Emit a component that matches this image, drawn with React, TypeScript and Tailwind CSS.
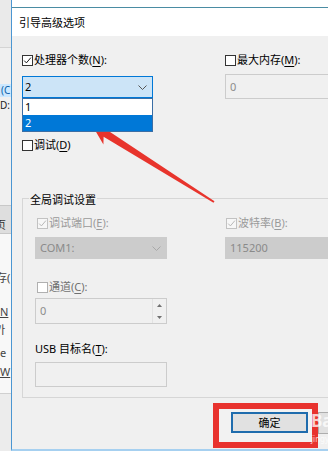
import React from "react";

type Tone = "normal" | "disabled" | "light";

const boxCls: Record<Tone, string> = {
  normal: "border-[#333333] bg-white",
  disabled: "border-[#c2c2c2] bg-[#f7f7f7]",
  light: "border-[#b0b0b0] bg-white",
};
const checkColor: Record<Tone, string> = {
  normal: "#1a1a1a",
  disabled: "#b8b8b8",
  light: "#888888",
};

function Box({ checked, tone = "normal" }: { checked?: boolean; tone?: Tone }) {
  return (
    <span className={`flex h-[11px] w-[11px] flex-none items-center justify-center border ${boxCls[tone]}`}>
      {checked && (
        <svg width="9" height="9" viewBox="0 0 9 9">
          <path d="M1.2 4.6 L3.4 6.9 L7.9 1.6" fill="none" stroke={checkColor[tone]} strokeWidth="1" />
        </svg>
      )}
    </span>
  );
}

function Chevron({ color }: { color: string }) {
  return (
    <svg width="9" height="5" viewBox="0 0 9 5">
      <path d="M0.5 0.5 L4.5 4.5 L8.5 0.5" fill="none" stroke={color} strokeWidth="1" />
    </svg>
  );
}

function U({ children }: { children: React.ReactNode }) {
  return <span className="underline underline-offset-[2px]">{children}</span>;
}

function LeftStrip() {
  return (
    <div className="flex w-[11px] flex-none flex-col overflow-hidden whitespace-nowrap bg-[#f0f0f0] text-[11px] leading-[14px]">
      <div className="h-[47px] flex-none bg-[#eaeaea]" />
      <div className="h-px flex-none bg-[#d4d4d4]" />
      <div className="h-[36px] flex-none" />
      <div className="h-[13px] flex-none overflow-hidden bg-[#cce8ff] pl-[1px] text-[10px] leading-[13px] text-[#0a5fa8]">(C</div>
      <div className="mt-[2px] h-[12px] flex-none overflow-hidden text-[10px] leading-[12px] text-[#222]">D:</div>
      <div className="h-[94px] flex-none" />
      <div className="flex h-[29px] flex-none items-end border-y border-[#c8c8c8] bg-[#dedede] pb-[1px]">
        <span className="-ml-[5px] text-[#333]">页</span>
      </div>
      <div className="flex h-[159px] flex-none flex-col bg-[#f8f8f8] text-[#444]">
        <div className="h-[37px] flex-none" />
        <div className="-ml-[4px] h-[14px] flex-none">存(</div>
        <div className="h-[20px] flex-none" />
        <div className="h-[14px] flex-none underline">N</div>
        <div className="h-[4px] flex-none" />
        <div className="-ml-[5px] h-[14px] flex-none">카</div>
        <div className="h-[9px] flex-none" />
        <div className="h-[14px] flex-none">e</div>
        <div className="h-[5px] flex-none" />
        <div className="h-[14px] flex-none underline">W</div>
      </div>
      <div className="h-px flex-none bg-[#d0d0d0]" />
      <div className="flex-1 bg-[#ececec]" />
    </div>
  );
}

export default function App() {
  return (
    <div className="relative flex h-[451px] w-[328px] overflow-hidden bg-[#f0f0f0] font-['Noto_Sans','Noto_Sans_CJK_SC',sans-serif] text-[11px] leading-[14px] text-black">
      <LeftStrip />
      <div className="flex min-w-0 flex-1 flex-col overflow-hidden border-b-2 border-l border-b-[#a6d0f0] border-l-[#4b96d2]">
        <div className="h-[7px] flex-none bg-white" />
        <div className="flex h-[29px] flex-none items-center border-t border-[#4a8ca3] bg-white pl-[7px] pt-[1px]">
          引导高级选项
        </div>
        <div className="flex flex-1 flex-col bg-[#f0f0f0] pl-[10px]">
          {/* top row */}
          <div className="mt-[17px] flex">
            <div className="flex w-[131px] flex-none flex-col">
              <div className="flex h-[14px] items-center gap-[1px]">
                <Box checked />
                <span>
                  处理器个数(<U>N</U>):
                </span>
              </div>
              <div className="relative mt-[9px]">
                <div className="flex h-[22px] items-center justify-between border border-[#0078d7] bg-[#cce4f7] pl-[2px] pr-[5px]">
                  <span>2</span>
                  <Chevron color="#555555" />
                </div>
                <div className="absolute left-0 top-full z-10 flex w-full flex-col border border-[#3b6ea5] bg-white">
                  <div className="flex h-[16px] items-center pl-[2px]">1</div>
                  <div className="flex h-[16px] items-center bg-[#0078d7] pl-[2px] text-white">2</div>
                </div>
              </div>
              <div className="mt-[40px] flex h-[14px] items-center gap-[1px]">
                <Box />
                <span>
                  调试(<U>D</U>)
                </span>
              </div>
            </div>
            <div className="ml-[72px] flex w-[130px] flex-none flex-col">
              <div className="flex h-[14px] items-center gap-[1px]">
                <Box />
                <span>
                  最大内存(<U>M</U>):
                </span>
              </div>
              <div className="mt-[7px] flex h-[25px] items-center border border-[#cccccc] bg-[#f0f0f0] pl-[4px] text-[#8c8c8c]">
                0
              </div>
            </div>
          </div>

          {/* group box */}
          <div className="mt-[46px] flex w-[320px] flex-none flex-col border border-[#d6d6d6] pb-[10px]">
            <div className="-mt-[6px] ml-[6px] w-fit bg-[#f0f0f0] px-[1px]">全局调试设置</div>
            <div className="flex pl-[12px]">
              <div className="flex w-[132px] flex-none flex-col">
                <div className="mt-[9px] flex h-[14px] items-center gap-[1px] pl-[2px] text-[#9a9a9a]">
                  <Box checked tone="disabled" />
                  <span>
                    调试端口(<U>E</U>):
                  </span>
                </div>
                <div className="mt-[7px] flex h-[22px] items-center justify-between border border-[#cccccc] bg-[#cccccc] pl-[4px] pr-[5px] text-[#8a8a8a]">
                  <span>COM1:</span>
                  <Chevron color="#a8a8a8" />
                </div>
                <div className="mt-[21px] flex h-[14px] items-center gap-[1px] pl-[2px] text-[#707070]">
                  <Box tone="light" />
                  <span>
                    通道(<U>C</U>):
                  </span>
                </div>
                <div className="mt-[4px] flex h-[26px] border border-[#cccccc] bg-[#f0f0f0] text-[#8c8c8c]">
                  <div className="flex flex-1 items-center pl-[4px]">0</div>
                  <div className="flex w-[14px] flex-none flex-col border-l border-[#e2e2e2]">
                    <div className="flex flex-1 items-center justify-center">
                      <svg width="5" height="3" viewBox="0 0 5 3">
                        <path d="M0 3 L2.5 0 L5 3 Z" fill="#707070" />
                      </svg>
                    </div>
                    <div className="flex flex-1 items-center justify-center">
                      <svg width="5" height="3" viewBox="0 0 5 3">
                        <path d="M0 0 L2.5 3 L5 0 Z" fill="#707070" />
                      </svg>
                    </div>
                  </div>
                </div>
                <div className="mt-[18px] h-[14px]">
                  USB 目标名(<U>T</U>):
                </div>
                <div className="mt-[6px] h-[25px] border border-[#cccccc] bg-[#f0f0f0]" />
              </div>
              <div className="ml-[58px] flex w-[120px] flex-none flex-col">
                <div className="mt-[9px] flex h-[14px] items-center gap-[1px] pl-[1px] text-[#9a9a9a]">
                  <Box checked tone="disabled" />
                  <span>
                    波特率(<U>B</U>):
                  </span>
                </div>
                <div className="mt-[7px] flex h-[22px] items-center border border-[#cccccc] bg-[#cccccc] pl-[4px] text-[#8a8a8a]">
                  115200
                </div>
              </div>
            </div>
          </div>

          {/* footer */}
          <div className="ml-[191px] mt-[5px] flex items-start">
            <div className="flex-none border-[6px] border-[#e8322e] bg-[#f2f2f2] pb-[9px] pl-[12px] pr-[4px] pt-[3px]">
              <div className="flex h-[21px] w-[77px] items-center justify-center border-2 border-[#1f6cad] bg-[#e1e1e1]">
                确定
              </div>
            </div>
            <div className="mt-[9px] h-[22px] w-[77px] flex-none border border-[#adadad] bg-[#e1e1e1]" />
          </div>
        </div>
      </div>

      {/* red annotation arrow */}
      <svg className="pointer-events-none absolute left-0 top-0" width="328" height="451" viewBox="0 0 328 451">
        <polygon
          points="92,125 114.5,126.8 107.8,130.4 214.5,201.2 213.5,202.8 103.6,136.8 103.4,144.6"
          fill="#e8342c"
        />
      </svg>

      {/* watermark */}
      <div className="pointer-events-none absolute left-[311px] top-[412px] flex flex-col leading-none text-white/75">
        <span className="text-[17px] font-bold">Bai</span>
        <span className="mt-[6px] text-[8px]">jingyan</span>
      </div>
    </div>
  );
}
